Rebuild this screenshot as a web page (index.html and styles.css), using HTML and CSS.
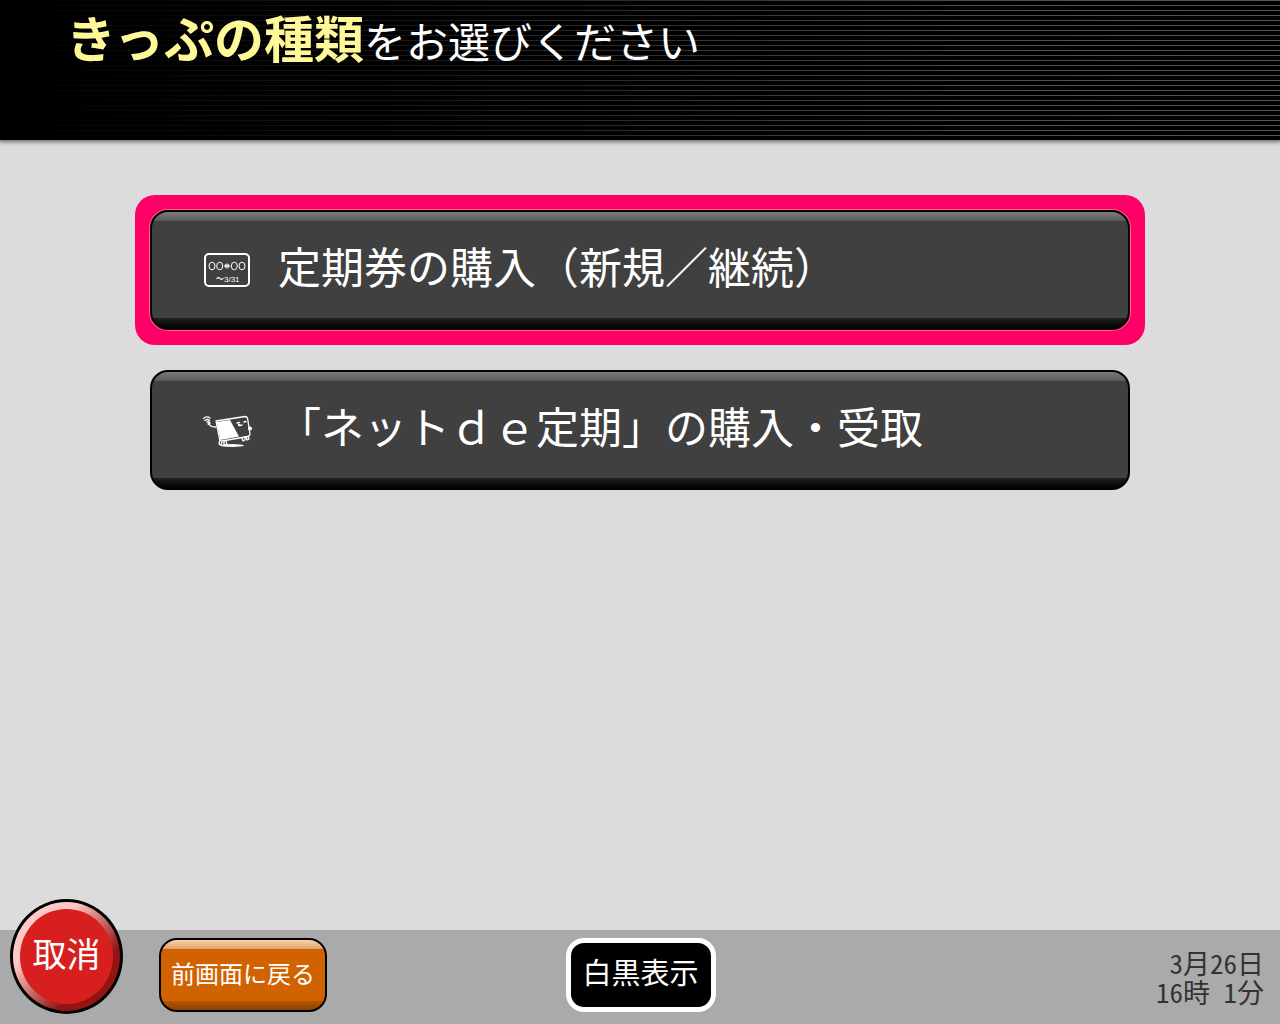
FILE: index.html
```
<!DOCTYPE html>
<html lang="ja">
<head>
    <meta charset="UTF-8">
    <meta name="viewport" content="width=device-width, initial-scale=1.0">
    <title>きっぷの種類</title>
    <link rel="stylesheet" href="styles.css">
</head>
<body>
<header class="header">
    <h1 class="title"><strong>きっぷの種類</strong>をお選びください</h1>
</header>

<main class="main">
    <ul class="menu">
        <li class="menu-item selected">
            <button class="menu-button" type="button">
                <svg class="menu-icon" viewBox="0 0 52 40" aria-hidden="true">
                    <rect x="3" y="4" width="44" height="32" rx="4" fill="none" stroke="#fff" stroke-width="2"/>
                    <g fill="none" stroke="#fff" stroke-width="1">
                        <ellipse cx="10" cy="16" rx="3" ry="3.8"/>
                        <ellipse cx="17.7" cy="16" rx="3" ry="3.8"/>
                        <ellipse cx="32.3" cy="16" rx="3" ry="3.8"/>
                        <ellipse cx="40" cy="16" rx="3" ry="3.8"/>
                        <path d="M14.500 29q2-2.500 3.500-.5t3.500-.5" stroke-width="1.200"/>
                    </g>
                    <path d="M21.800 16l2.700-3v1.500h1v-1.500l2.700 3-2.700 3v-1.500h-1v1.500z" fill="#ddd"/>
                    <text class="icon-text" x="22" y="32">3/31</text>
                </svg>
                <span>定期券の購入（新規／継続）</span>
            </button>
        </li>
        <li class="menu-item">
            <button class="menu-button" type="button">
                <svg class="menu-icon" viewBox="0 0 52 40" aria-hidden="true">
                    <ellipse cx="30" cy="35.500" rx="12" ry="1.500" fill="#fff"/>
                    <g fill="none" stroke="#fff" stroke-width="1.300" stroke-linejoin="round" stroke-linecap="round">
                        <path d="M14 11L43 6.500q2 0 2.500 1.500L48 24q0 2-2 2.500L20 31q-2 0-2.500-2z"/>
                        <path d="M14 17c-5 0-7.500-1-8-5"/>
                        <path d="M1.500 8.500q3-3 6.500-.5M3 10.500q2.500-2 4.500 0M5 12q2-1 3 1q0 2-2 1"/>
                        <path d="M18 30l-1 4 2 1 1-3M22 31v4h3l-1-4M40 28l1 3 2-1v-3M44 27l1 3 2-1-1-3"/>
                        <path d="M35 13l2.500-.5M42 12l2-.5M38 15.500l2-.5"/>
                    </g>
                    <path d="M14.500 12L28 10 37 26.500 18.500 30z" fill="#fff"/>
                    <circle cx="37" cy="15" r="1.200" fill="#fff"/>
                    <circle cx="48" cy="18.500" r="2" fill="#fff"/>
                </svg>
                <span>「ネットｄｅ定期」の購入・受取</span>
            </button>
        </li>
    </ul>
</main>

<footer class="footer">
    <button class="cancel-button" type="button"><span>取消</span></button>
    <div class="footer-left">
        <button class="back-button" type="button">前画面に戻る</button>
    </div>
    <button class="mono-button" type="button">白黒表示</button>
    <div class="clock">3月26日<br>16時 1分</div>
</footer>
</body>
</html>
```
FILE: styles.css
```
* {
    box-sizing: border-box;
}

body {
    margin: 0;
    min-height: 100vh;
    display: flex;
    flex-direction: column;
    background-color: #dcdcdc;
    color: #fff;
    font-family: "Noto Sans CJK JP", sans-serif;
}

button {
    margin: 0;
    padding: 0;
    color: #fff;
    font-family: inherit;
    cursor: pointer;
}

/* black header, thin lines fading in from the left */
.header {
    min-height: 140px;
    padding: 0 66px;
    background:
        linear-gradient(to right, #000 0, rgba(0, 0, 0, 0.75) 30%, rgba(0, 0, 0, 0.1) 75%, rgba(0, 0, 0, 0) 100%),
        repeating-linear-gradient(to bottom, #555 0, #555 1px, #000 1px, #000 5px);
    box-shadow: 0 1px 4px 1px rgba(0, 0, 0, 0.5);
}

.title {
    margin: 0;
    font-size: 42px;
    font-weight: 400;
    line-height: 72px;
}

.title strong {
    color: #fff899;
    font-size: 50px;
    font-weight: 700;
}

.main {
    flex: 1;
    padding: 55px 135px;
}

.menu {
    margin: 0;
    padding: 0;
    list-style: none;
    display: flex;
    flex-direction: column;
    gap: 10px;
}

.menu-item {
    padding: 15px;
    border-radius: 20px;
}

.menu-item.selected {
    background-color: #ff0066;
}

.menu-button {
    width: 100%;
    height: 120px;
    padding: 0 50px;
    display: flex;
    align-items: center;
    gap: 24px;
    border: 2px solid #000;
    border-radius: 18px;
    background:
        linear-gradient(#7c7c7c, #5a5a5a) top / 100% 9px no-repeat,
        linear-gradient(#202020, #000) bottom / 100% 10px no-repeat,
        #404040;
    font-size: 43px;
    line-height: 60px;
    text-align: left;
}

.menu-button span {
    padding-bottom: 10px;
}

.selected .menu-button {
    box-shadow: 0 0 0 1px #ff5c98;
}

.menu-icon {
    width: 52px;
    height: 40px;
    flex-shrink: 0;
}

.icon-text {
    fill: #fff;
    font-family: "Liberation Sans", sans-serif;
    font-size: 8px;
}

.footer {
    position: relative;
    min-height: 94px;
    padding: 8px 16px 12px 159px;
    display: flex;
    align-items: center;
    background-color: #aaa;
}

/* the red button sticks out above the footer bar */
.cancel-button {
    position: absolute;
    left: 10px;
    bottom: 10px;
    width: 113px;
    height: 115px;
    padding: 7px;
    border: 3px solid #000;
    border-radius: 50%;
    background: linear-gradient(135deg, #ffc8c8 30%, #941414 70%);
    font-size: 34px;
}

.cancel-button span {
    height: 100%;
    display: flex;
    align-items: center;
    justify-content: center;
    border-radius: 50%;
    background-color: #d71f1f;
    padding-bottom: 8px;
}

.footer-left {
    flex: 1;
}

.back-button {
    display: block;
    width: 168px;
    height: 74px;
    padding-bottom: 6px;
    border: 2px solid #000;
    border-radius: 18px;
    background:
        linear-gradient(#fbd3ae, #dfa16c) top / 100% 9px no-repeat,
        linear-gradient(#b65600, #8c4200) bottom / 100% 9px no-repeat,
        #d06300;
    font-size: 24px;
}

.mono-button {
    width: 150px;
    height: 74px;
    padding-bottom: 8px;
    border: 5px solid #fff;
    border-radius: 18px;
    background-color: #000;
    font-size: 29px;
}

.clock {
    flex: 1;
    margin-left: 142px;
    padding-top: 4px;
    color: #333;
    font-size: 27px;
    font-feature-settings: "hwid";
    line-height: 29px;
    text-align: right;
}
```
